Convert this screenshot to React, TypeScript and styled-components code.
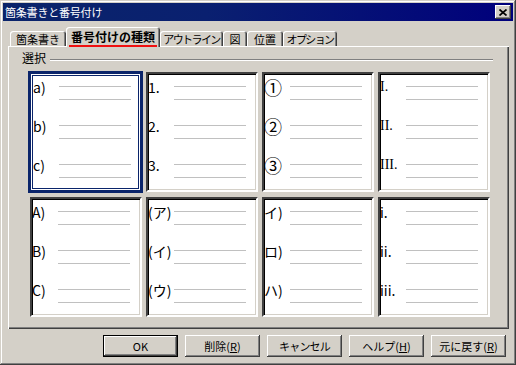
import React from 'react';
import styled, { createGlobalStyle, css } from 'styled-components';

const GlobalStyle = createGlobalStyle`
  html, body {
    margin: 0;
    padding: 0;
    background: #d4d0c8;
  }
`;

type Preset = { items: string[]; serif?: boolean; big?: boolean };

const presets: Preset[] = [
  { items: ['a)', 'b)', 'c)'] },
  { items: ['1.', '2.', '3.'] },
  { items: ['①', '②', '③'], big: true },
  { items: ['I.', 'II.', 'III.'], serif: true },
  { items: ['A)', 'B)', 'C)'] },
  { items: ['(ア)', '(イ)', '(ウ)'] },
  { items: ['イ)', 'ロ)', 'ハ)'] },
  { items: ['i.', 'ii.', 'iii.'] },
];

const tabs = [
  { label: '箇条書き', width: 56 },
  { label: '番号付けの種類', width: 94, active: true },
  { label: 'アウトライン', width: 63, tight: true },
  { label: '図', width: 24 },
  { label: '位置', width: 36 },
  { label: 'オプション', width: 54, tight: true },
];

const CloseIcon = () => (
  <svg width="8" height="7" viewBox="0 0 8 7">
    <path d="M0.5 0.5 L7.5 6.5 M7.5 0.5 L0.5 6.5" stroke="#000" strokeWidth="1.7" />
  </svg>
);

export default function App() {
  return (
    <>
      <GlobalStyle />
      <Window>
        <TitleBar>
          <TitleText>箇条書きと番号付け</TitleText>
          <CloseButton>
            <CloseIcon />
          </CloseButton>
        </TitleBar>

        <TabStrip>
          {tabs.map((tab) => (
            <Tab
              key={tab.label}
              $width={tab.width}
              $active={!!tab.active}
              $tight={!!tab.tight}
            >
              {tab.active ? <ActiveLabel>{tab.label}</ActiveLabel> : tab.label}
            </Tab>
          ))}
        </TabStrip>

        <Panel>
          <GroupHeader>
            <GroupTitle>選択</GroupTitle>
            <Etched />
          </GroupHeader>

          <PresetGrid>
            {presets.map((preset, i) => (
              <Cell key={i} $selected={i === 0}>
                <Preview $selected={i === 0}>
                  {preset.items.map((label) => (
                    <Row key={label}>
                      <Label $serif={!!preset.serif} $big={!!preset.big}>
                        {label}
                      </Label>
                      <Lines>
                        <Rule />
                        <Rule />
                      </Lines>
                    </Row>
                  ))}
                </Preview>
              </Cell>
            ))}
          </PresetGrid>
        </Panel>

        <ButtonRow>
          <Button $default>OK</Button>
          <Button>
            削除(<u>R</u>)
          </Button>
          <Button $tight>キャンセル</Button>
          <Button>
            ヘルプ(<u>H</u>)
          </Button>
          <Button>
            元に戻す(<u>R</u>)
          </Button>
        </ButtonRow>
      </Window>
    </>
  );
}

const Window = styled.div`
  width: 516px;
  height: 365px;
  box-sizing: border-box;
  padding: 3px;
  display: flex;
  flex-direction: column;
  background: #d4d0c8;
  box-shadow:
    inset -1px -1px #404040,
    inset 1px 1px #d4d0c8,
    inset -2px -2px #808080,
    inset 2px 2px #fff;
  font-family: 'Noto Sans CJK JP', 'DejaVu Sans', sans-serif;
  font-size: 11px;
  color: #000;
`;

const TitleBar = styled.div`
  display: flex;
  align-items: center;
  justify-content: space-between;
  height: 18px;
  padding: 0 2px;
  background: linear-gradient(to right, #0a246a, #0a2070 40%, #00007c);
`;

const TitleText = styled.span`
  color: #fff;
  font-size: 11px;
  line-height: 14px;
  letter-spacing: -0.2px;
`;

const CloseButton = styled.div`
  display: flex;
  align-items: center;
  justify-content: center;
  width: 16px;
  height: 14px;
  box-sizing: border-box;
  background: #d4d0c8;
  box-shadow:
    inset -1px -1px #404040,
    inset 1px 1px #fff,
    inset -2px -2px #808080;
`;

const TabStrip = styled.div`
  display: flex;
  align-items: flex-end;
  height: 20px;
  margin: 6px 0 -1px 7px;
`;

const Tab = styled.div<{ $width: number; $active: boolean; $tight: boolean }>`
  width: ${({ $width }) => $width}px;
  height: 16px;
  box-sizing: border-box;
  display: flex;
  align-items: center;
  justify-content: center;
  overflow: hidden;
  background: #d4d0c8;
  border-radius: 3px 3px 0 0;
  box-shadow:
    inset 1px 1px #fff,
    inset -1px 0 #404040,
    inset -2px 0 #808080;
  white-space: nowrap;
  letter-spacing: ${({ $tight }) => ($tight ? '-1.6px' : '0')};
  ${({ $active }) =>
    $active &&
    css`
      position: relative;
      z-index: 1;
      height: 20px;
      padding-bottom: 1px;
      font-size: 12px;
      font-weight: bold;
    `}
`;

const ActiveLabel = styled.span`
  display: inline-block;
  line-height: 14px;
  padding: 0 2px 1px;
  border-bottom: 2px solid #f01010;
  margin-top: 3px;
`;

const Panel = styled.div`
  height: 283px;
  box-sizing: border-box;
  margin: 0 4px 0 5px;
  padding: 5px 0 0 14px;
  box-shadow:
    inset 1px 1px #fff,
    inset -1px -1px #404040,
    inset -2px -2px #808080;
`;

const GroupHeader = styled.div`
  display: flex;
  align-items: center;
  gap: 4px;
  height: 14px;
  margin-right: 16px;
`;

const GroupTitle = styled.span`
  font-size: 12px;
  line-height: 14px;
`;

const Etched = styled.div`
  flex: 1;
  margin-top: 3px;
  border-top: 1px solid #808080;
  border-bottom: 1px solid #fff;
`;

const PresetGrid = styled.div`
  display: grid;
  grid-template-columns: repeat(4, 116px);
  grid-template-rows: 124px 124px;
  row-gap: 1px;
  margin: 5px 0 0 6px;
`;

const Cell = styled.div<{ $selected: boolean }>`
  box-sizing: border-box;
  padding: ${({ $selected }) => ($selected ? '1px 1px 1px 0' : '2px')};
`;

const Preview = styled.div<{ $selected: boolean }>`
  height: 100%;
  box-sizing: border-box;
  background: #fff;
  ${({ $selected }) =>
    $selected
      ? css`
          border: 3px solid #0a246a;
          padding: 5px 0 0 2px;
          box-shadow:
            inset 0 0 0 1px #fff,
            inset 0 0 0 2px #0a246a;
        `
      : css`
          border: 2px solid;
          border-color: #404040 #fff #fff #404040;
          padding: 5px 0 0 0;
          box-shadow:
            inset 1px 1px #000,
            inset -1px -1px #d4d0c8;
        `}
`;

const Row = styled.div`
  display: grid;
  height: 39px;
  & > * {
    grid-area: 1 / 1;
  }
`;

const Label = styled.span<{ $serif: boolean; $big: boolean }>`
  font-size: ${({ $big }) => ($big ? '18px' : '14px')};
  line-height: 16px;
  white-space: nowrap;
  font-family: ${({ $serif }) =>
    $serif
      ? "'Liberation Serif', 'Noto Sans CJK JP', serif"
      : "'Noto Sans CJK JP', 'DejaVu Sans', sans-serif"};
`;

const Lines = styled.div`
  display: flex;
  flex-direction: column;
  gap: 12px;
  width: 72px;
  margin-left: 26px;
  padding-top: 7px;
`;

const Rule = styled.div`
  height: 1px;
  background: #c0c0c0;
`;

const ButtonRow = styled.div`
  display: flex;
  justify-content: flex-end;
  gap: 7px;
  margin-top: 6px;
  padding-right: 7px;
`;

const Button = styled.div<{ $default?: boolean; $tight?: boolean }>`
  width: 75px;
  height: 22px;
  box-sizing: border-box;
  display: flex;
  align-items: center;
  justify-content: center;
  white-space: nowrap;
  font-size: 11px;
  letter-spacing: ${({ $tight }) => ($tight ? '-0.8px' : '0')};
  background: #d4d0c8;
  box-shadow:
    inset -1px -1px #404040,
    inset 1px 1px #fff,
    inset -2px -2px #808080,
    inset 2px 2px #d4d0c8;
  ${({ $default }) =>
    $default &&
    css`
      border: 1px solid #000;
    `}

  u {
    text-decoration-thickness: 1px;
    text-underline-offset: 1px;
  }
`;
